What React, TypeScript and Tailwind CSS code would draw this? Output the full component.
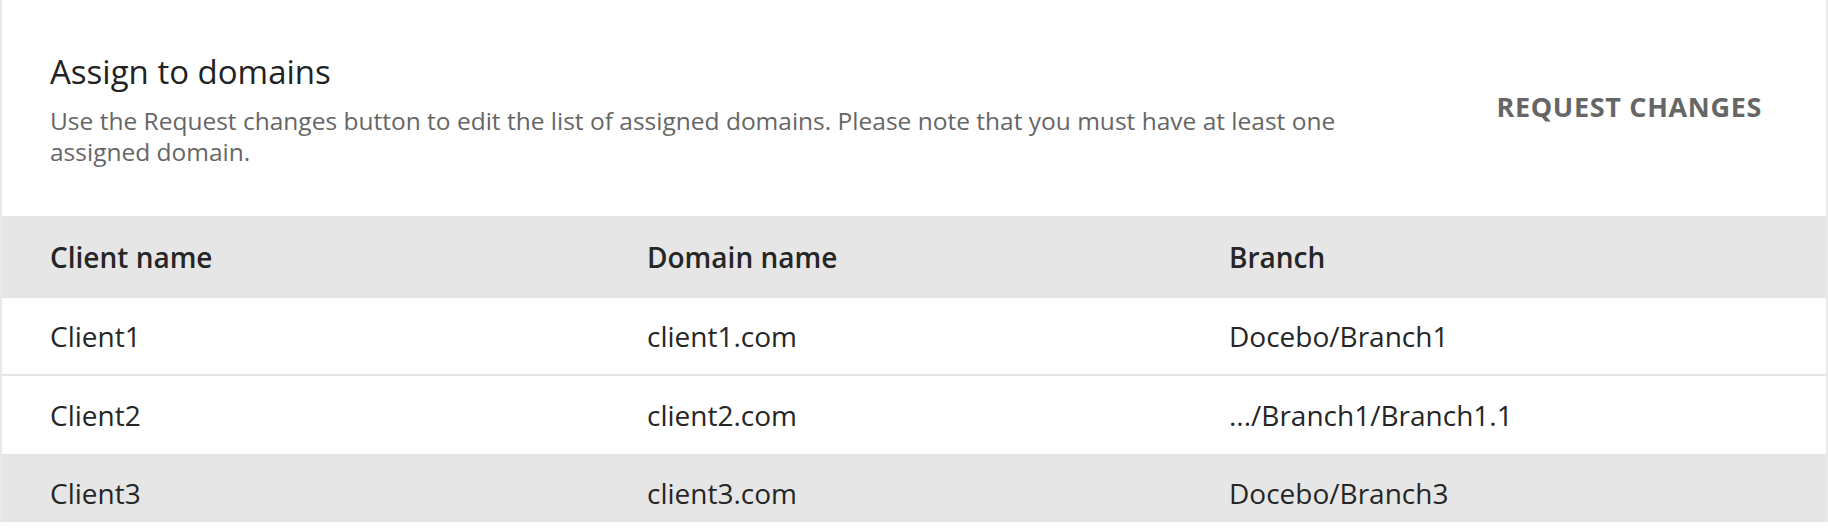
import React from "react";

const rows = [
  { client: "Client1", domain: "client1.com", branch: "Docebo/Branch1" },
  { client: "Client2", domain: "client2.com", branch: ".../Branch1/Branch1.1" },
  { client: "Client3", domain: "client3.com", branch: "Docebo/Branch3" },
];

export default function App() {
  return (
    <div className="h-[532px] w-full bg-white font-['Open_Sans',sans-serif]">
      <div className="h-[522px] overflow-hidden border-x-2 border-[#e9e9e9] bg-white">
        {/* Header */}
        <div className="flex items-start justify-between pl-12 pr-16 pt-[50px] pb-[49px]">
          <div className="max-w-[1330px]">
            <h2 className="text-[33px] leading-[44px] text-[#222222]">Assign to domains</h2>
            <p className="mt-[11px] text-[24.5px] leading-[31px] text-[#666666]">
              Use the Request changes button to edit the list of assigned domains. Please note that you must have at least one assigned domain.
            </p>
          </div>
          <button className="mt-[37px] text-[27px] font-bold uppercase tracking-wide text-[#666666]">
            Request changes
          </button>
        </div>

        {/* Table */}
        <div className="grid h-[82px] grid-cols-[597px_582px_1fr] items-center bg-[#e6e6e6] pl-12 text-[28px] font-semibold text-[#262626]">
          <div>Client name</div>
          <div>Domain name</div>
          <div>Branch</div>
        </div>
        {rows.map((r, i) => (
          <div
            key={r.client}
            className={`grid h-[78px] grid-cols-[597px_582px_1fr] items-center pl-12 text-[28px] text-[#262626] ${
              i === 2 ? "bg-[#e6e6e6]" : "bg-white"
            } ${i === 0 ? "border-b-2 border-[#e6e6e6]" : ""}`}
          >
            <div>{r.client}</div>
            <div>{r.domain}</div>
            <div>{r.branch}</div>
          </div>
        ))}
      </div>
    </div>
  );
}
